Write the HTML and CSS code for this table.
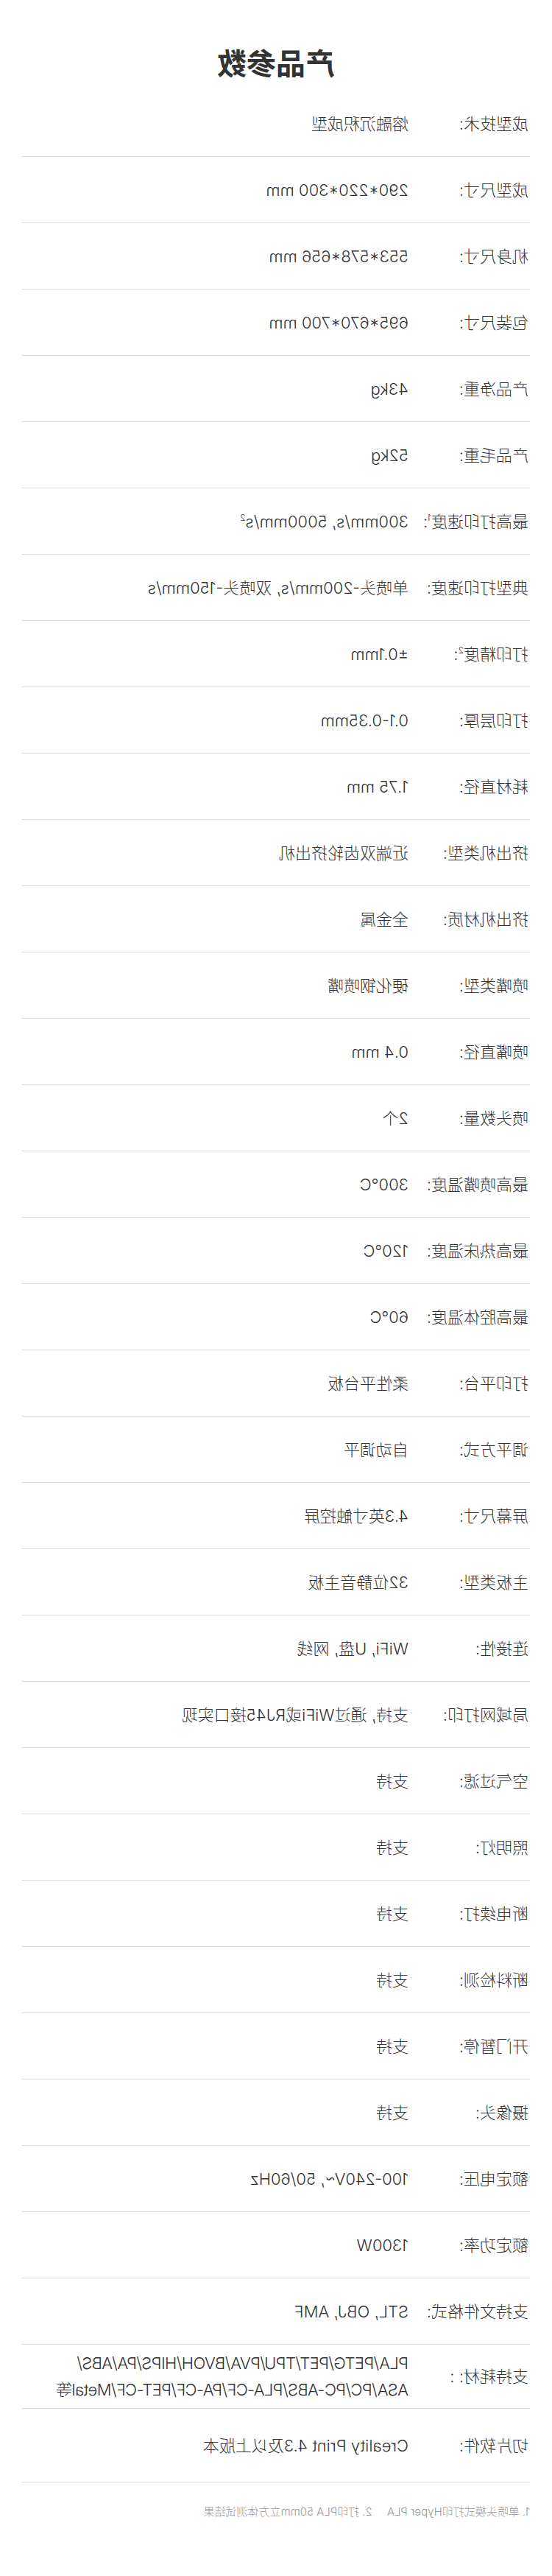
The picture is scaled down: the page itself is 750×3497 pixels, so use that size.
FILE: index.html
```html
<!DOCTYPE html>
<html lang="zh-CN">
<head>
<meta charset="utf-8">
<title>产品参数</title>
<link rel="stylesheet" href="styles.css">
</head>
<body>
<main class="page">
  <h1 class="title">产品参数</h1>
  <div class="specs">
    <div class="row"><div class="label">成型技术:</div><div class="value">熔融沉积成型</div></div>
    <div class="row"><div class="label">成型尺寸:</div><div class="value">290*220*300 mm</div></div>
    <div class="row"><div class="label">机身尺寸:</div><div class="value">553*578*656 mm</div></div>
    <div class="row"><div class="label">包装尺寸:</div><div class="value">695*670*700 mm</div></div>
    <div class="row"><div class="label">产品净重:</div><div class="value">43kg</div></div>
    <div class="row"><div class="label">产品毛重:</div><div class="value">52kg</div></div>
    <div class="row"><div class="label">最高打印速度<sup>1</sup>:</div><div class="value">300mm/s, 5000mm/s<sup>2</sup></div></div>
    <div class="row"><div class="label">典型打印速度:</div><div class="value">单喷头-200mm/s, 双喷头-150mm/s</div></div>
    <div class="row"><div class="label">打印精度<sup>2</sup>:</div><div class="value">±0.1mm</div></div>
    <div class="row"><div class="label">打印层厚:</div><div class="value">0.1-0.35mm</div></div>
    <div class="row"><div class="label">耗材直径:</div><div class="value">1.75 mm</div></div>
    <div class="row"><div class="label">挤出机类型:</div><div class="value">近端双齿轮挤出机</div></div>
    <div class="row"><div class="label">挤出机材质:</div><div class="value">全金属</div></div>
    <div class="row"><div class="label">喷嘴类型:</div><div class="value">硬化钢喷嘴</div></div>
    <div class="row"><div class="label">喷嘴直径:</div><div class="value">0.4 mm</div></div>
    <div class="row"><div class="label">喷头数量:</div><div class="value">2个</div></div>
    <div class="row"><div class="label">最高喷嘴温度:</div><div class="value">300°C</div></div>
    <div class="row"><div class="label">最高热床温度:</div><div class="value">120°C</div></div>
    <div class="row"><div class="label">最高腔体温度:</div><div class="value">60°C</div></div>
    <div class="row"><div class="label">打印平台:</div><div class="value">柔性平台板</div></div>
    <div class="row"><div class="label">调平方式:</div><div class="value">自动调平</div></div>
    <div class="row"><div class="label">屏幕尺寸:</div><div class="value">4.3英寸触控屏</div></div>
    <div class="row"><div class="label">主板类型:</div><div class="value">32位静音主板</div></div>
    <div class="row"><div class="label">连接性:</div><div class="value">WiFi, U盘, 网线</div></div>
    <div class="row"><div class="label">局域网打印:</div><div class="value">支持, 通过WiFi或RJ45接口实现</div></div>
    <div class="row"><div class="label">空气过滤:</div><div class="value">支持</div></div>
    <div class="row"><div class="label">照明灯:</div><div class="value">支持</div></div>
    <div class="row"><div class="label">断电续打:</div><div class="value">支持</div></div>
    <div class="row"><div class="label">断料检测:</div><div class="value">支持</div></div>
    <div class="row"><div class="label">开门暂停:</div><div class="value">支持</div></div>
    <div class="row"><div class="label">摄像头:</div><div class="value">支持</div></div>
    <div class="row"><div class="label">额定电压:</div><div class="value">100-240V~, 50/60Hz</div></div>
    <div class="row"><div class="label">额定功率:</div><div class="value">1300W</div></div>
    <div class="row"><div class="label">支持文件格式:</div><div class="value">STL, OBJ, AMF</div></div>
    <div class="row row--multi"><div class="label">支持耗材: :</div><div class="value value--wrap">PLA/PETG/PET/TPU/PVA/BVOH/HIPS/PA/ABS/<br>ASA/PC/PC-ABS/PLA-CF/PA-CF/PET-CF/Metal等</div></div>
    <div class="row row--last"><div class="label">切片软件:</div><div class="value">Creality Print 4.3及以上版本</div></div>
  </div>
  <div class="notes">
    <span>1. 单喷头模式打印Hyper PLA</span>
    <span>2. 打印PLA 50mm立方体测试结果</span>
  </div>
</main>
</body>
</html>
```

FILE: styles.css
```css
html, body {
  margin: 0;
  padding: 0;
  background: #ffffff;
}

body {
  font-family: "Inter", "Noto Sans CJK SC", sans-serif;
  color: #333333;
}

.page {
  width: 750px;
  min-height: 3497px;
  box-sizing: border-box;
  padding: 56px 30px 0;
  transform: scaleX(-1);
}

.title {
  margin: 0 0 11px;
  height: 56px;
  line-height: 56px;
  font-size: 40px;
  font-weight: 700;
  text-align: center;
  color: #333333;
  font-family: "Noto Sans CJK SC", sans-serif;
}

.specs {
  display: flex;
  flex-direction: column;
}

.row {
  display: flex;
  align-items: center;
  min-height: 89px;
  border-bottom: 1px solid #dddddd;
  font-size: 22px;
  font-weight: 300;
}

.row--multi {
  min-height: 86px;
}

.row--last {
  min-height: 99px;
}

.label {
  flex: 0 0 165px;
  padding-left: 2px;
  box-sizing: border-box;
  line-height: 30px;
  white-space: nowrap;
}

.value {
  flex: 1;
  line-height: 30px;
}

.value--wrap {
  line-height: 36px;
  white-space: nowrap;
  letter-spacing: -0.6px;
}

sup {
  font-size: 12px;
  line-height: 0;
  vertical-align: 9px;
}

.notes {
  display: flex;
  gap: 20px;
  margin-top: 30px;
  font-size: 15px;
  line-height: 20px;
  font-weight: 300;
  color: #999999;
}
```
